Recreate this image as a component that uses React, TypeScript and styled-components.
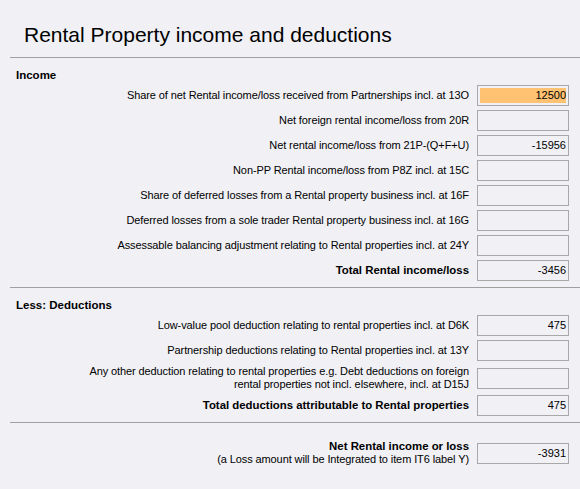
import React from 'react';
import styled, { createGlobalStyle } from 'styled-components';

const GlobalStyle = createGlobalStyle`
  body {
    margin: 0;
    background: #f0f0f5;
    font-family: "Liberation Sans", Arial, sans-serif;
    color: #000;
  }
`;

const Page = styled.div`
  width: 580px;
  height: 489px;
  overflow: hidden;
  background: #f0f0f5;
`;

const Title = styled.h1`
  margin: 0;
  padding: 23px 0 0 24px;
  font-size: 21px;
  font-weight: normal;
  line-height: 24px;
  margin-bottom: 10px;
`;

const Divider = styled.div`
  margin-left: 10px;
  border-top: 1px solid #a0a0a0;
`;

const Section = styled.div<{ $top?: number; $bottom?: number }>`
  padding: ${p => p.$top ?? 11}px 11px ${p => p.$bottom ?? 6}px 0;
`;

const Heading = styled.div`
  padding-left: 16px;
  font-size: 11.5px;
  font-weight: bold;
  line-height: 13px;
  margin-bottom: 3px;
`;

const Rows = styled.div`
  display: flex;
  flex-direction: column;
  gap: 4px;
`;

const Row = styled.div`
  display: grid;
  grid-template-columns: 1fr 92px;
  column-gap: 8px;
  align-items: center;
`;

const Label = styled.div<{ $bold?: boolean }>`
  text-align: right;
  font-size: ${p => (p.$bold ? '11.4px' : '11px')};
  letter-spacing: ${p => (p.$bold ? '0' : '-0.1px')};
  line-height: 13px;
  font-weight: ${p => (p.$bold ? 'bold' : 'normal')};
  white-space: nowrap;
`;

const Note = styled.span`
  display: block;
  font-size: 11px;
  letter-spacing: -0.1px;
  font-weight: normal;
`;

const ValueBox = styled.div`
  box-sizing: border-box;
  height: 21px;
  border: 1px solid #a8a8a8;
  padding: 2px;
`;

const Fill = styled.div<{ $highlight?: boolean }>`
  height: 100%;
  background: ${p => (p.$highlight ? '#ffc272' : 'transparent')};
  text-align: right;
  font-size: 11px;
  line-height: 15px;
`;

type Line = { label: React.ReactNode; value?: string; bold?: boolean; highlight?: boolean };

const income: Line[] = [
  { label: 'Share of net Rental income/loss received from Partnerships incl. at 13O', value: '12500', highlight: true },
  { label: 'Net foreign rental income/loss from 20R' },
  { label: 'Net rental income/loss from 21P-(Q+F+U)', value: '-15956' },
  { label: 'Non-PP Rental income/loss from P8Z incl. at 15C' },
  { label: 'Share of deferred losses from a Rental property business incl. at 16F' },
  { label: 'Deferred losses from a sole trader Rental property business incl. at 16G' },
  { label: 'Assessable balancing adjustment relating to Rental properties incl. at 24Y' },
  { label: 'Total Rental income/loss', value: '-3456', bold: true },
];

const deductions: Line[] = [
  { label: 'Low-value pool deduction relating to rental properties incl. at D6K', value: '475' },
  { label: 'Partnership deductions relating to Rental properties incl. at 13Y' },
  {
    label: (
      <>
        Any other deduction relating to rental properties e.g. Debt deductions on foreign
        <br />
        rental properties not incl. elsewhere, incl. at D15J
      </>
    ),
  },
  { label: 'Total deductions attributable to Rental properties', value: '475', bold: true },
];

const FieldRow = ({ label, value, bold, highlight }: Line) => (
  <Row>
    <Label $bold={bold}>{label}</Label>
    <ValueBox>
      <Fill $highlight={highlight}>{value}</Fill>
    </ValueBox>
  </Row>
);

const App = () => (
  <Page>
    <GlobalStyle />
    <Title>Rental Property income and deductions</Title>
    <Divider />
    <Section>
      <Heading>Income</Heading>
      <Rows>
        {income.map((l, i) => (
          <FieldRow key={i} {...l} />
        ))}
      </Rows>
    </Section>
    <Divider />
    <Section>
      <Heading>Less: Deductions</Heading>
      <Rows>
        {deductions.map((l, i) => (
          <FieldRow key={i} {...l} />
        ))}
      </Rows>
    </Section>
    <Divider />
    <Section $top={17} $bottom={26}>
      <FieldRow
        bold
        value="-3931"
        label={
          <>
            Net Rental income or loss
            <Note>(a Loss amount will be Integrated to item IT6 label Y)</Note>
          </>
        }
      />
    </Section>
    <Divider />
  </Page>
);

export default App;
